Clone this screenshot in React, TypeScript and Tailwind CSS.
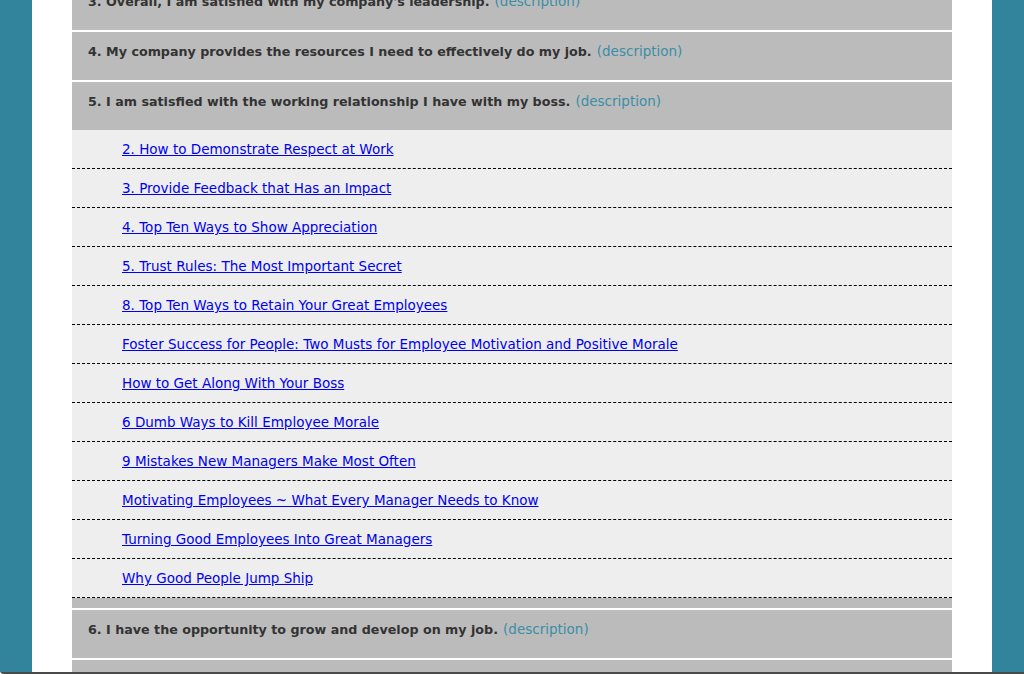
const questions = [
  { n: 3, text: "Overall, I am satisfied with my company's leadership." },
  { n: 4, text: 'My company provides the resources I need to effectively do my job.' },
  { n: 5, text: 'I am satisfied with the working relationship I have with my boss.' },
  { n: 6, text: 'I have the opportunity to grow and develop on my job.' },
  { n: 7, text: 'I feel that my work is valued and appreciated by my company.' },
]

const links = [
  '2. How to Demonstrate Respect at Work',
  '3. Provide Feedback that Has an Impact',
  '4. Top Ten Ways to Show Appreciation',
  '5. Trust Rules: The Most Important Secret',
  '8. Top Ten Ways to Retain Your Great Employees',
  'Foster Success for People: Two Musts for Employee Motivation and Positive Morale',
  'How to Get Along With Your Boss',
  '6 Dumb Ways to Kill Employee Morale',
  '9 Mistakes New Managers Make Most Often',
  'Motivating Employees ~ What Every Manager Needs to Know',
  'Turning Good Employees Into Great Managers',
  'Why Good People Jump Ship',
]

function Question({ n, text, open }: { n: number; text: string; open?: boolean }) {
  return (
    <div className={`bg-[#bbbbbb] ${open ? 'pb-[10px]' : ''}`}>
      <div className="h-[48px] px-[16px] pt-[11px] leading-[16px]">
        <span className="text-[12.7px] font-bold text-[#333333]">
          {n}. {text}
        </span>{' '}
        <a href="#" className="text-[13.5px] text-[#3a8ea6]">(description)</a>
      </div>
      {open && (
        <ul className="bg-[#eeeeee]">
          {links.map((l) => (
            <li key={l} className="h-[39px] border-b border-dashed border-black pl-[50px] pt-[11px] text-[13.5px] leading-[17px]">
              <a href="#" className="text-[#0000ee] underline">{l}</a>
            </li>
          ))}
        </ul>
      )}
    </div>
  )
}

export default function App() {
  return (
    <div
      className="flex h-[674px] w-[1024px] flex-col overflow-hidden rounded-bl-[4px] border-b-2 border-[#4a4a4a] bg-[#31849b]"
      style={{ fontFamily: '"DejaVu Sans", Verdana, sans-serif' }}
    >
      <div className="mx-[32px] flex-1 overflow-hidden bg-white px-[40px]">
        <div className="-mt-[18px] flex flex-col gap-[2px]">
          {questions.map((q) => (
            <Question key={q.n} n={q.n} text={q.text} open={q.n === 5} />
          ))}
        </div>
      </div>
    </div>
  )
}
